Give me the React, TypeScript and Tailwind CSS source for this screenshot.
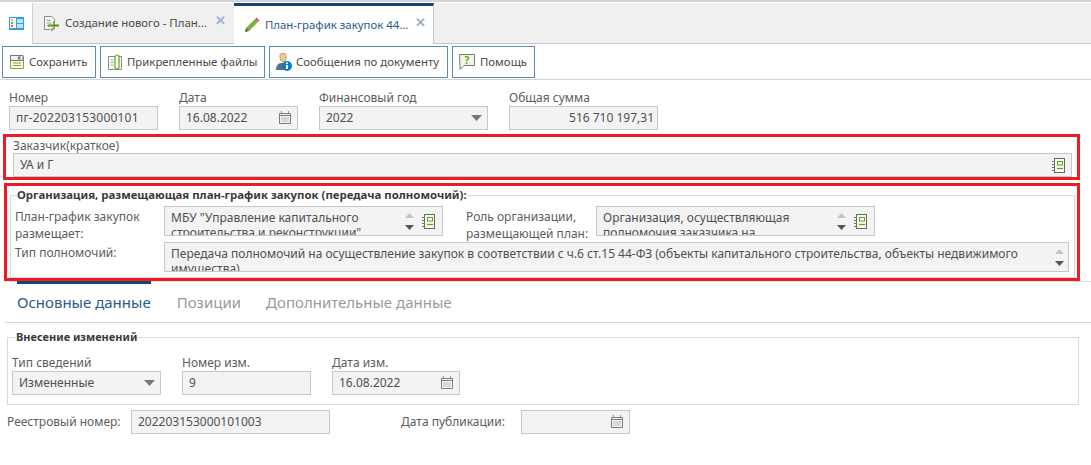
import React from "react";

const CalendarIcon = () => (
  <svg width="12" height="14" viewBox="0 0 12 14" className="shrink-0">
    <path d="M2.5 0v3M9.5 0v3" stroke="#7fae2e" />
    <path d="M0.5 2.5h11v10h-11zM0.5 4.5h11" fill="none" stroke="#7d7d7d" />
    <rect x="2" y="6" width="8" height="5" fill="#d8d8d8" />
  </svg>
);

const BookIcon = () => (
  <svg width="13" height="15" viewBox="0 0 13 15" className="shrink-0">
    <rect x="2.5" y="0.5" width="10" height="14" fill="#f8f8f0" stroke="#666" />
    <path d="M0 3.5h3M0 6.5h3M0 9.5h3M0 12.5h3" stroke="#777" />
    <rect x="5.5" y="3.5" width="5" height="3.5" fill="#fff" stroke="#5aa80a" />
    <path d="M5 10.5h6" stroke="#5aa80a" strokeWidth="1.2" />
  </svg>
);

const ArrowDown = () => (
  <svg width="11" height="6" viewBox="0 0 11 6" className="shrink-0">
    <path d="M0 0h11L5.5 6z" fill="#777" />
  </svg>
);

const Spinner = () => (
  <div className="flex flex-col gap-[7px] items-center shrink-0">
    <svg width="9" height="5" viewBox="0 0 9 5"><path d="M4.5 0L9 5H0z" fill="#c4c4c4" /></svg>
    <svg width="9" height="5" viewBox="0 0 9 5"><path d="M0 0h9L4.5 5z" fill="#555" /></svg>
  </div>
);

const boxCls = "border border-[#c8c8c8] bg-[#f3f3f3] text-[#505050] flex items-center";
const labelCls = "text-[#5c5c5c]";

function Labeled({ label, width, children }: { label: string; width: string; children: React.ReactNode }) {
  return (
    <div className={`flex flex-col shrink-0 ${width}`}>
      <div className={`h-[16px] leading-[16px] ${labelCls}`}>{label}</div>
      {children}
    </div>
  );
}

function Btn({ icon, text, width, pad, gap }: { icon: React.ReactNode; text: string; width: string; pad: string; gap: string }) {
  return (
    <div className={`h-[32px] ${width} ${pad} ${gap} border border-[#5d8bb3] bg-white flex items-center text-[#4a4a4a] text-[11.4px] shrink-0`}>
      {icon}
      <span className="whitespace-nowrap">{text}</span>
    </div>
  );
}

export default function App() {
  return (
    <div
      className="w-[1091px] h-[465px] bg-white overflow-hidden text-[12px] text-[#505050]"
      style={{ fontFamily: '"Noto Sans", sans-serif' }}
    >
      <div className="h-[3px] bg-white border-t-2 border-[#d4d4d4]" />
      {/* Tabs */}
      <div className="h-[41px] bg-[#f0f0f0] border-b border-[#c8c8c8] flex text-[11.4px]">
        <div className="w-[33px] h-[41px] bg-white border-r border-[#cfcfcf] flex items-center justify-center">
          <svg width="15" height="13" viewBox="0 0 15 13">
            <rect width="15" height="13" fill="#2f9fe0" />
            <rect x="1" y="1" width="6" height="10" fill="#fff" />
            <rect x="8" y="2" width="6" height="4" fill="#bfe2f7" />
            <rect x="8" y="7" width="6" height="4" fill="#bfe2f7" />
            <rect x="2" y="2" width="2" height="2" fill="#e9b23c" />
            <rect x="2" y="5" width="2" height="2" fill="#6db33f" />
            <rect x="2" y="8" width="2" height="2" fill="#d9534f" />
          </svg>
        </div>
        <div className="w-[201px] h-[40px] flex items-center pl-[11px] text-[#4a4a4a]">
          <svg width="16" height="15" viewBox="0 0 16 15" className="shrink-0">
            <path d="M0.5 0.5h7l3 3v3M0.5 0.5v13h6" fill="#fafafa" stroke="#8a8a8a" />
            <path d="M2.5 4.5h4M2.5 7h5M2.5 9.5h3" stroke="#a5a5a5" />
            <path d="M4 9.5h11" stroke="#5a9216" strokeWidth="2" />
            <path d="M10 5.5v8M8 12.5v2.5" stroke="#5a9216" strokeWidth="1.4" />
          </svg>
          <span className="ml-[5px] whitespace-nowrap w-[147px]">Создание нового - План...</span>
          <span className="text-[#9fb3c8] text-[13px] font-bold leading-none -mt-[6px] ml-[3px]">✕</span>
        </div>
        <div className="w-[200px] h-[41px] bg-white border-t-[3px] border-t-[#12447a] border-r border-r-[#c8c8c8] flex items-center pl-[10px] text-[#2c5a8a]">
          <svg width="16" height="16" viewBox="0 0 16 16" className="shrink-0">
            <path d="M1 15l1-4 9-9 3 3-9 9z" fill="#7fb13a" />
            <path d="M11 2l1.5-1.5 3 3L14 5z" fill="#e0526a" />
            <path d="M1 15l1-4 3 3z" fill="#666" />
          </svg>
          <span className="ml-[5px] whitespace-nowrap w-[147px]">План-график закупок 44...</span>
          <span className="text-[#9fb3c8] text-[13px] font-bold leading-none -mt-[6px] ml-[3px]">✕</span>
        </div>
      </div>
      {/* Toolbar */}
      <div className="h-[36px] border-b border-[#d4d4d4] flex gap-[4px] pl-[2px] pt-[2px]">
        <Btn
          width="w-[94px]"
          pad="pl-[7px]"
          gap="gap-[5px]"
          text="Сохранить"
          icon={
            <svg width="14" height="14" viewBox="0 0 14 14" className="shrink-0">
              <path d="M0.5 0.5h11.5l1.5 1.5v11.5h-13z" fill="#f7f7ee" stroke="#7fae2e" />
              <path d="M0.5 0.5h12.5v5h-12.5z" fill="#f0f0f0" stroke="#777" />
              <rect x="8" y="1.5" width="2.5" height="3" fill="#777" />
              <path d="M3 8h8M3 10.5h8" stroke="#7fae2e" />
            </svg>
          }
        />
        <Btn
          width="w-[165px]"
          pad="pl-[7px]"
          gap="gap-[5px]"
          text="Прикрепленные файлы"
          icon={
            <svg width="14" height="16" viewBox="0 0 14 16" className="shrink-0">
              <path d="M0.5 2.5h13v13h-13z" fill="#fbfbf6" stroke="#8a8a8a" />
              <path d="M2.5 6h3M2.5 8.5h3M2.5 11h3" stroke="#a5a5a5" />
              <path d="M7 13V3a2 2 0 014 0v10a2 2 0 01-4 0" fill="#fff" stroke="#5aa80a" strokeWidth="1.2" />
            </svg>
          }
        />
        <Btn
          width="w-[179px]"
          pad="pl-[6px]"
          gap="gap-[4px]"
          text="Сообщения по документу"
          icon={
            <svg width="16" height="18" viewBox="0 0 16 18" className="shrink-0">
              <path d="M4 2.5c0-3 6-3 6 0 0 2.5 0 6-3 6s-3-3.500-3-6z" fill="#f0cc96" stroke="#a8843f" strokeWidth="0.8" />
              <path d="M0 17c0-4 2-7 5-7h3v7z" fill="#55708c" />
              <circle cx="11" cy="13" r="5" fill="#0f7bc4" />
              <rect x="10" y="12" width="2" height="4" fill="#fff" />
              <rect x="10" y="9.500" width="2" height="1.600" fill="#fff" />
            </svg>
          }
        />
        <Btn
          width="w-[83px]"
          pad="pl-[6px]"
          gap="gap-[5px]"
          text="Помощь"
          icon={
            <svg width="16" height="16" viewBox="0 0 16 16" className="shrink-0">
              <path d="M0.5 0.5h15v11H5l-4 4z" fill="#f3f3e6" stroke="#777" />
              <text x="8" y="9.5" fontSize="10" fontWeight="700" textAnchor="middle" fill="#5aa80a">?</text>
            </svg>
          }
        />
      </div>
      {/* Row 1 */}
      <div className="flex pl-[9px] gap-[21px] mt-[10px]">
        <Labeled label="Номер" width="w-[149px]">
          <div className={`${boxCls} h-[24px] pl-[6px] tracking-[0.2px]`}>пг-202203153000101</div>
        </Labeled>
        <Labeled label="Дата" width="w-[119px]">
          <div className={`${boxCls} h-[24px] pl-[6px] pr-[6px] justify-between`}>16.08.2022<CalendarIcon /></div>
        </Labeled>
        <Labeled label="Финансовый год" width="w-[169px]">
          <div className={`${boxCls} h-[24px] pl-[6px] pr-[5px] justify-between`}>2022<ArrowDown /></div>
        </Labeled>
        <Labeled label="Общая сумма" width="w-[149px]">
          <div className={`${boxCls} h-[24px] pr-[3px] justify-end`}>516 710 197,31</div>
        </Labeled>
      </div>
      {/* Red 1 */}
      <div className="ml-[3px] mt-[4px] w-[1077px] h-[46px] border-[3px] border-[#ed1c24] pl-[7px] pr-[5px] pt-[1px]">
        <div className={`h-[15px] leading-[15px] ${labelCls}`}>Заказчик(краткое)</div>
        <div className={`${boxCls} h-[24px] pl-[6px] pr-[6px] justify-between`}>УА и Г<BookIcon /></div>
      </div>
      {/* Red 2 */}
      <div className="ml-[4px] mt-[3px] w-[1076px] h-[98px] border-[3px] border-[#ed1c24] pl-[3px] pr-[2px] overflow-hidden">
        <fieldset className="border border-[#d9d9d9] h-[90px] mt-[2px] pl-[4px] pr-[5px]">
          <legend className="font-bold text-[11.4px] leading-[14px] ml-[2px] text-[#3a3a3a]">Организация, размещающая план-график закупок (передача полномочий):</legend>
          <div className="flex mt-[4px]">
            <div className={`w-[149px] h-[30px] leading-[17px] pt-[2px] shrink-0 ${labelCls}`}>План-график закупок размещает:</div>
            <div className="w-[279px] h-[30px] border border-[#c8c8c8] bg-[#f3f3f3] flex shrink-0">
              <div className="w-[240px] h-[28px] px-[6px] pt-[3px] leading-[15px] overflow-hidden">МБУ "Управление капитального строительства и реконструкции"</div>
              <div className="flex items-center gap-[8px]"><Spinner /><BookIcon /></div>
            </div>
            <div className={`w-[130px] h-[30px] ml-[23px] leading-[17px] pt-[2px] shrink-0 whitespace-nowrap ${labelCls}`}>Роль организации,<br />размещающей план:</div>
            <div className="w-[279px] h-[30px] border border-[#c8c8c8] bg-[#f3f3f3] flex shrink-0">
              <div className="w-[240px] h-[28px] px-[6px] pt-[3px] leading-[15px] overflow-hidden">Организация, осуществляющая полномочия заказчика на</div>
              <div className="flex items-center gap-[8px]"><Spinner /><BookIcon /></div>
            </div>
          </div>
          <div className="flex mt-[6px]">
            <div className={`w-[149px] pt-[2px] leading-[17px] shrink-0 ${labelCls}`}>Тип полномочий:</div>
            <div className="w-[905px] h-[30px] border border-[#c8c8c8] bg-[#f3f3f3] flex shrink-0">
              <div className="w-[884px] h-[28px] px-[6px] pt-[3px] leading-[15px] overflow-hidden">Передача полномочий на осуществление закупок в соответствии с ч.6 ст.15 44-ФЗ (объекты капитального строительства, объекты недвижимого имущества)</div>
              <div className="flex items-center pl-[6px]"><Spinner /></div>
            </div>
          </div>
        </fieldset>
      </div>
      {/* Content tabs */}
      <div className="ml-[5px] h-[42px] border-t border-[#dedede] border-b border-b-[#d4d4d4] flex text-[15px] text-[#9a9a9a]">
        <div className="ml-[12px] h-[40px] -mt-[1px] border-t-[3px] border-[#12447a] text-[#2c5a8a] leading-[37px] whitespace-nowrap">Основные данные</div>
        <div className="ml-[26px] leading-[40px]">Позиции</div>
        <div className="ml-[25px] leading-[40px]">Дополнительные данные</div>
      </div>
      {/* Changes */}
      <fieldset className="ml-[7px] mt-[7px] w-[1072px] h-[75px] border border-[#d9d9d9] pl-[4px]">
        <legend className="font-bold text-[11px] leading-[14px] ml-[4px] text-[#3a3a3a]">Внесение изменений</legend>
        <div className="flex gap-[21px] mt-[11px]">
          <Labeled label="Тип сведений" width="w-[149px]">
            <div className={`${boxCls} h-[24px] pl-[6px] pr-[5px] justify-between`}>Измененные<ArrowDown /></div>
          </Labeled>
          <Labeled label="Номер изм." width="w-[129px]">
            <div className={`${boxCls} h-[24px] pl-[6px]`}>9</div>
          </Labeled>
          <Labeled label="Дата изм." width="w-[128px]">
            <div className={`${boxCls} h-[24px] pl-[6px] pr-[6px] justify-between`}>16.08.2022<CalendarIcon /></div>
          </Labeled>
        </div>
      </fieldset>
      <div className="flex items-center pl-[7px] mt-[5px]">
        <div className={`w-[124px] whitespace-nowrap ${labelCls}`}>Реестровый номер:</div>
        <div className={`${boxCls} w-[199px] h-[24px] pl-[6px]`}>202203153000101003</div>
        <div className={`ml-[71px] w-[120px] whitespace-nowrap ${labelCls}`}>Дата публикации:</div>
        <div className={`${boxCls} w-[109px] h-[24px] pr-[6px] justify-end`}><CalendarIcon /></div>
      </div>
    </div>
  );
}
